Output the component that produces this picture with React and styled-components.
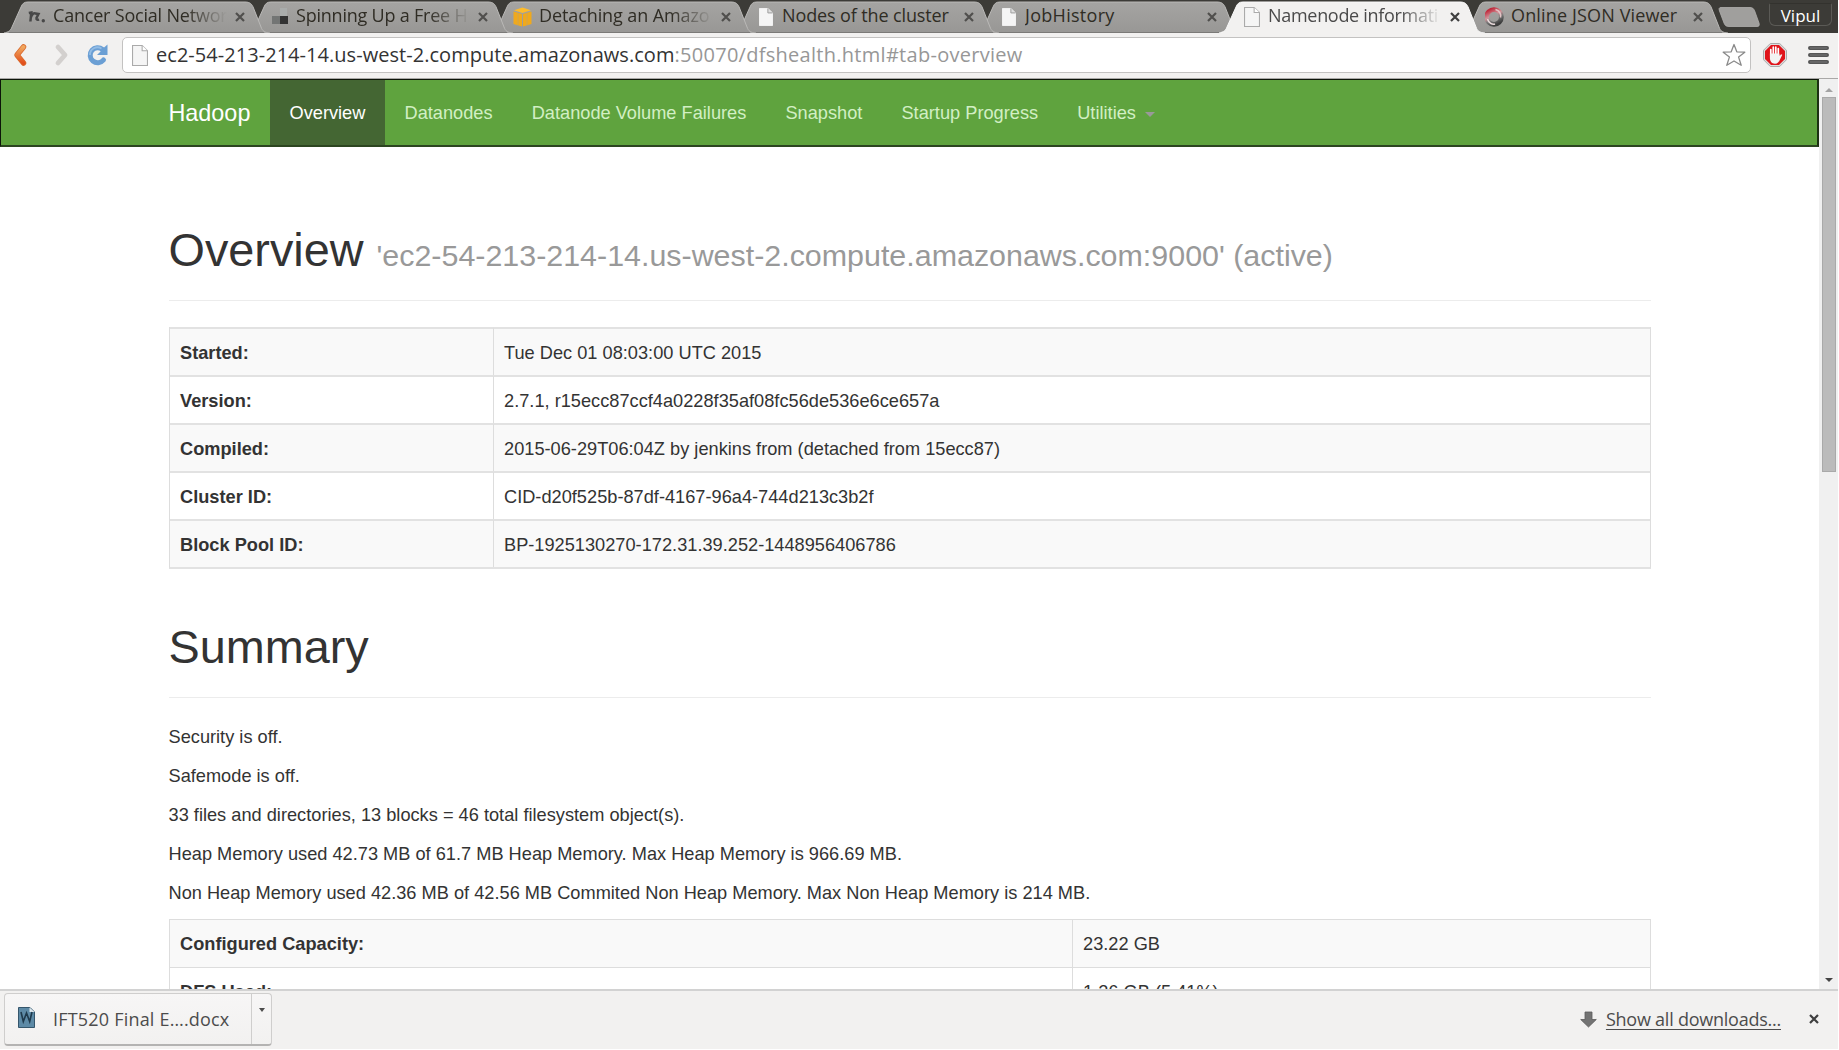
import React from "react";
import styled, { createGlobalStyle, css } from "styled-components";

const uiFont = `"Open Sans", "Noto Sans", sans-serif`;
const pageFont = `"Liberation Sans", Arial, sans-serif`;

const GlobalStyle = createGlobalStyle`
  * { box-sizing: border-box; }
  html, body { margin: 0; padding: 0; background: #fff; overflow: hidden; }
`;

const Window = styled.div`
  width: 1838px;
  height: 1049px;
  display: flex;
  flex-direction: column;
  overflow: hidden;
  background: #fff;
`;

/* ---------- tab strip ---------- */

const TabStrip = styled.div`
  display: flex;
  flex: none;
  height: 33px;
  padding-left: 8px;
  background: #3c3b37;
`;

const TabBox = styled.div`
  position: relative;
  z-index: ${(p) => p.$level};
  flex: none;
  display: flex;
  align-items: center;
  width: 258px;
  height: 33px;
  margin-right: -15px;
  padding: 0 20px 4px 19px;
`;

const TabShape = styled.svg`
  position: absolute;
  left: -4px;
  top: 0;
  z-index: -1;
`;

const Favicon = styled.span`
  flex: none;
  display: flex;
  align-items: center;
  width: 26px;
  height: 20px;
  margin-top: 5px;
`;

const PageIconSlot = styled.span`
  display: flex;
  padding-left: ${(p) => (p.$active ? 2 : 3)}px;
`;

const TabTitle = styled.span`
  flex: none;
  width: 174px;
  margin-top: 1px;
  overflow: hidden;
  white-space: nowrap;
  font: 18px/26px ${uiFont};
  letter-spacing: ${(p) => p.$spacing}px;
  color: ${(p) => (p.$active ? "#4a4a4a" : "#2f2c24")};
  ${(p) =>
    p.$fade &&
    css`
      mask-image: linear-gradient(to right, #000 132px, transparent 174px);
    `}
`;

const TabClose = styled.svg`
  flex: none;
  margin: 5px 0 0 8px;
`;

const NewTab = styled.svg`
  flex: none;
  margin: 6px 0 0 8px;
`;

const UserBadge = styled.div`
  width: 63px;
  height: 23px;
  margin: 3px 6px 0 auto;
  border: 1px solid #5b5a56;
  border-top-color: #33322e;
  border-radius: 2px 2px 6px 6px;
  text-align: center;
  font: 17px/23px ${uiFont};
  color: #fff;
`;

/* ---------- toolbar ---------- */

const Toolbar = styled.div`
  flex: none;
  display: flex;
  align-items: flex-start;
  height: 46px;
  padding-top: 4px;
  background: #f2f1f0;
  border-bottom: 1px solid #a9a8a7;
`;

const NavIcons = styled.div`
  flex: none;
  display: flex;
  align-items: center;
  width: 122px;
  height: 36px;
  padding-left: 13px;
`;

const ForwardIcon = styled.svg`
  margin-left: 26px;
`;

const ReloadIcon = styled.svg`
  margin-left: 17px;
`;

const AddressBar = styled.div`
  flex: none;
  display: flex;
  align-items: center;
  width: 1629px;
  height: 36px;
  padding: 0 4px 0 9px;
  background: #fff;
  border: 1px solid #c3c2c1;
  border-radius: 5px;
`;

const Url = styled.span`
  flex: 1;
  margin-left: 8px;
  font: 20px/28px ${uiFont};
  letter-spacing: 0.04px;
  color: #333;
  white-space: nowrap;
`;

const UrlPath = styled.span`
  letter-spacing: 0.28px;
  color: #979797;
`;

const ToolbarActions = styled.div`
  display: flex;
  align-items: center;
  gap: 21px;
  height: 36px;
  padding-left: 12px;
`;

/* ---------- page ---------- */

const Viewport = styled.div`
  flex: 1;
  min-height: 0;
  display: flex;
`;

const Page = styled.main`
  flex: 1;
  min-width: 0;
  overflow: hidden;
  font: 18.2px/26px ${pageFont};
  letter-spacing: 0.012px;
  color: #333;
`;

const Navbar = styled.nav`
  display: flex;
  height: 68px;
  padding-left: 148px;
  background: #5fa33e;
  border: 1px solid #0c1408;
  border-bottom: 2px solid #2c4520;
  border-right: 2px solid #1d3213;
`;

const Brand = styled.a`
  width: 121px;
  padding: 0 19px 0 19.4px;
  font-size: 23.4px;
  line-height: 66px;
  color: #fff;
`;

const NavLink = styled.a`
  display: flex;
  align-items: center;
  padding: 0 19.6px 0 19.5px;
  height: 65px;
  white-space: nowrap;
  color: ${(p) => (p.$active ? "#fff" : "#d2efc4")};
  background: ${(p) => (p.$active ? "#446633" : "transparent")};
`;

const Caret = styled.i`
  margin: 3px 0 0 9px;
  border: 5px solid transparent;
  border-top-color: #999;
  border-bottom: 0;
`;

const Content = styled.div`
  width: 1482px;
  margin-left: 169px;
`;

const PageHeader = styled.header`
  height: ${(p) => p.$height}px;
  padding-top: ${(p) => p.$top}px;
  border-bottom: 1px solid #ececec;
`;

const Title = styled.h1`
  margin: 0 0 0 -0.5px;
  font-size: 46.8px;
  font-weight: 400;
  line-height: 52px;
  letter-spacing: 0;
  white-space: nowrap;
`;

const Small = styled.small`
  font-size: 30.42px;
  color: #999;
`;

const Table = styled.div`
  display: grid;
  grid-template-columns: ${(p) => p.$first}px 1fr;
  margin-top: ${(p) => p.$top}px;
  border: solid #ddd;
  border-width: 0 1px 2px;
  border-bottom-color: #e2e2e2;
`;

const Cell = styled.div`
  height: 48px;
  padding: ${(p) => (p.$thin ? 11 : 10.5)}px 10px 0;
  border-top: ${(p) => (p.$thin ? "1px solid #ddd" : "2px solid #e2e2e2")};
  border-left: ${(p) => (p.$label ? "0" : "1px solid #ddd")};
  font-weight: ${(p) => (p.$label ? 700 : 400)};
  background: ${(p) => (p.$striped ? "#f9f9f9" : "#fff")};
  white-space: nowrap;
`;

const Facts = styled.div`
  margin: 26px 0 0 -0.5px;
`;

const Paragraph = styled.p`
  margin: 0 0 13px;
`;

const Scrollbar = styled.div`
  flex: none;
  display: flex;
  flex-direction: column;
  align-items: center;
  width: 19px;
  padding: 9px 0 7px;
  background: #f0f0f0;
`;

const ScrollArrow = styled.i`
  border: 4.5px solid transparent;
  ${(p) =>
    p.$up
      ? css`
          border-top: 0;
          border-bottom-color: #a3a3a3;
        `
      : css`
          margin-top: auto;
          border-bottom: 0;
          border-top-color: #444;
        `}
`;

const ScrollThumb = styled.div`
  width: 14px;
  height: 375px;
  margin-top: 5px;
  background: #bbb;
  border: 1px solid #a9a9a9;
`;

/* ---------- downloads shelf ---------- */

const Shelf = styled.footer`
  flex: none;
  display: flex;
  align-items: flex-start;
  height: 60px;
  padding: 2px 19px 0 4px;
  background: #f2f1f0;
  border-top: 2px solid #d2d2d2;
  font: 18px/26px ${uiFont};
  color: #4c4c4c;
`;

const Download = styled.div`
  display: flex;
  width: 268px;
  height: 53px;
  border: 1px solid #cfcecd;
  border-bottom: 2px solid #b4b3b2;
  border-radius: 4px;
  background: linear-gradient(#f7f6f6, #f2f1f0);
`;

const DownloadFile = styled.div`
  flex: 1;
  display: flex;
  align-items: center;
  padding: 0 0 3px 13px;
  letter-spacing: 0.2px;
  white-space: nowrap;
`;

const DownloadName = styled.span`
  margin: 2px 0 0 18px;
`;

const DownloadMenu = styled.div`
  width: 20px;
  padding: 14px 0 0 7px;
  border-left: 1px solid #cfcecd;
`;

const MenuArrow = styled.i`
  display: block;
  width: 0;
  border: 3.5px solid transparent;
  border-top: 4px solid #4c4c4c;
  border-bottom: 0;
`;

const ShelfRight = styled.div`
  display: flex;
  align-items: center;
  height: 52px;
  margin-left: auto;
`;

const ShowAll = styled.a`
  margin: 0 28px 0 9px;
  letter-spacing: -0.24px;
  text-decoration: underline;
  text-decoration-thickness: 1px;
  text-underline-offset: 3px;
`;

/* ---------- drawings ---------- */

const PageIcon = ({ w = 15, h = 19, outlined }) => (
  <svg width={w} height={h} viewBox="0 0 15 20" preserveAspectRatio="none">
    <path d="M.5.5h9l5 5v14H.5z" fill="#f5f5f5" stroke={outlined ? "#aaa" : "#f5f5f5"} />
    <path d="M9.5.5v5h5" fill={outlined ? "#fff" : "#ddd"} stroke={outlined ? "#aaa" : "#999"} />
  </svg>
);

const ScriptIcon = () => (
  <svg width="19" height="14" viewBox="0 0 19 14">
    <path d="M1.800 3 4.300 2.500 3.400 11.500M3.800 7.500C5 4 7 2.500 8.500 3.500L11.500 4 9.500 8c-.3 2 1 2 2.500 1.300" fill="none" stroke="#484848" strokeWidth="2.500" />
    <circle cx="16.300" cy="10.800" r="1.700" fill="#484848" />
  </svg>
);

const BlocksIcon = () => (
  <svg width="19" height="20" viewBox="0 0 19 20">
    <path fill="#a9acab" d="M10 1h7v8h-7z" />
    <path fill="#737574" d="M2 9h8v8H2z" />
    <path fill="#333" d="M10 9h8v8h-8z" />
  </svg>
);

const CubeIcon = () => (
  <svg width="19" height="20" viewBox="0 0 19 20">
    <path fill="#fdbb2b" d="M9.500.5 18 3.200 9.500 6 1 3.200z" />
    <path fill="#f0a91c" d="M.5 4.500 9 7v12.500L.5 17zM18.500 4.500 10 7v12.500l8.500-2.500z" />
    <path stroke="#c9a35c" strokeWidth=".8" d="M5 5.800V18M14 5.800V18M.5 4.500v12.200" />
  </svg>
);

const RingIcon = () => (
  <svg width="21" height="20" viewBox="0 0 21 20">
    <defs>
      <linearGradient id="ring" x1="0.200" y1="0" x2=".7" y2="1">
        <stop offset="0" stopColor="#c02a3c" />
        <stop offset=".4" stopColor="#d0949a" />
        <stop offset=".65" stopColor="#777" />
        <stop offset="1" stopColor="#3d3d3d" />
      </linearGradient>
    </defs>
    <circle cx="9" cy="10" r="7.400" fill="none" stroke="url(#ring)" strokeWidth="4.800" />
    <path d="M2.500 12c1 4 5 6 7.500 5" fill="none" stroke="#e8d9da" strokeWidth="1.500" />
    <path d="M10.500 2.500c4 1 6 5 5 8" fill="none" stroke="#e3c4c6" strokeWidth="1.500" />
  </svg>
);

const favicons = {
  script: <ScriptIcon />,
  blocks: <BlocksIcon />,
  cube: <CubeIcon />,
  ring: <RingIcon />,
};

const CloseGlyph = ({ color }) => (
  <path d="M1 1l8 8M9 1L1 9" stroke={color} strokeWidth="2.200" fill="none" />
);

const BackIcon = () => (
  <svg width="15" height="24" viewBox="0 0 15 24">
    <defs>
      <linearGradient id="back" x1="0" y1="0" x2="0" y2="1">
        <stop offset="0" stopColor="#f0a75e" />
        <stop offset="1" stopColor="#e2501c" />
      </linearGradient>
    </defs>
    <path d="M10.500 4 4 12l6.500 8" fill="none" stroke="#d9692c" strokeWidth="5.500" strokeLinecap="round" strokeLinejoin="round" />
    <path d="M10.500 4 4 12l6.500 8" fill="none" stroke="url(#back)" strokeWidth="4" strokeLinecap="round" strokeLinejoin="round" />
  </svg>
);

const tabs = [
  { title: "Cancer Social Networ", icon: "script", spacing: -0.2, fade: true },
  { title: "Spinning Up a Free H", icon: "blocks", spacing: -0.22, fade: true },
  { title: "Detaching an Amazo", icon: "cube", spacing: -0.1, fade: true },
  { title: "Nodes of the cluster", spacing: -0.12 },
  { title: "JobHistory", spacing: 0.3 },
  { title: "Namenode informati", spacing: -0.3, fade: true, active: true },
  { title: "Online JSON Viewer", icon: "ring", spacing: 0.15 },
];

const edgePath = "M0 33C5 32 7 30 8 27L17 7C18.500 3.500 20 2 24 2H241C246 2 248 4 249.500 8L257 27C258.500 31 260 32.500 266 33";

const Tab = ({ tab, level }) => (
  <TabBox $level={level}>
    <TabShape width="266" height="33" viewBox="0 0 266 33">
      <defs>
        <linearGradient id="tabfill" x1="0" y1="0" x2="0" y2="1">
          <stop offset="0" stopColor="#a5a4a2" />
          <stop offset="1" stopColor="#989795" />
        </linearGradient>
      </defs>
      <path d={`${edgePath}z`} fill={tab.active ? "#f2f1f0" : "url(#tabfill)"} />
      <path d={edgePath} fill="none" stroke={tab.active ? "#fafafa" : "#bab9b7"} strokeWidth="1" />
      {!tab.active && <path d="M5 32.500H260" stroke="#7b7a78" />}
    </TabShape>
    <Favicon>
      {tab.icon ? (
        favicons[tab.icon]
      ) : (
        <PageIconSlot $active={tab.active}>
          <PageIcon w={tab.active ? 16 : 14} h={tab.active ? 20 : 18} outlined={tab.active} />
        </PageIconSlot>
      )}
    </Favicon>
    <TabTitle $spacing={tab.spacing} $fade={tab.fade} $active={tab.active}>{tab.title}</TabTitle>
    <TabClose width="10" height="10" viewBox="0 0 10 10">
      <CloseGlyph color={tab.active ? "#3f3f3f" : "#504f4d"} />
    </TabClose>
  </TabBox>
);

const navItems = ["Overview", "Datanodes", "Datanode Volume Failures", "Snapshot", "Startup Progress", "Utilities"];

const clusterRows = [
  ["Started:", "Tue Dec 01 08:03:00 UTC 2015"],
  ["Version:", "2.7.1, r15ecc87ccf4a0228f35af08fc56de536e6ce657a"],
  ["Compiled:", "2015-06-29T06:04Z by jenkins from (detached from 15ecc87)"],
  ["Cluster ID:", "CID-d20f525b-87df-4167-96a4-744d213c3b2f"],
  ["Block Pool ID:", "BP-1925130270-172.31.39.252-1448956406786"],
];

const capacityRows = [
  ["Configured Capacity:", "23.22 GB"],
  ["DFS Used:", "1.26 GB (5.41%)"],
];

const facts = [
  "Security is off.",
  "Safemode is off.",
  "33 files and directories, 13 blocks = 46 total filesystem object(s).",
  "Heap Memory used 42.73 MB of 61.7 MB Heap Memory. Max Heap Memory is 966.69 MB.",
  "Non Heap Memory used 42.36 MB of 42.56 MB Commited Non Heap Memory. Max Non Heap Memory is 214 MB.",
];

const InfoTable = ({ rows, first, top, thin }) => (
  <Table $first={first} $top={top}>
    {rows.map(([label, value], i) => (
      <React.Fragment key={label}>
        <Cell $label $striped={i % 2 === 0} $thin={thin}>{label}</Cell>
        <Cell $striped={i % 2 === 0} $thin={thin}>{value}</Cell>
      </React.Fragment>
    ))}
  </Table>
);

export default function App() {
  return (
    <Window>
      <GlobalStyle />
      <TabStrip>
        {tabs.map((tab, i) => (
          <Tab key={tab.title} tab={tab} level={tab.active ? 20 : 10 - i} />
        ))}
        <NewTab width="44" height="22" viewBox="0 0 44 22">
          <path d="M4 1.500h29c2.500 0 3.500 1 4.500 3l4.500 12.500c.8 2.500 0 3.500-2 3.500H12c-3 0-4-1-5-3.500L2.500 5c-.8-2.300-.5-3.500 1.500-3.500z" fill="#a09f9d" stroke="#b0afad" strokeWidth=".8" />
        </NewTab>
        <UserBadge>Vipul</UserBadge>
      </TabStrip>

      <Toolbar>
        <NavIcons>
          <BackIcon />
          <ForwardIcon width="15" height="24" viewBox="0 0 15 24">
            <path d="M4 4l7 8-7 8" fill="none" stroke="#d3d0ce" strokeWidth="4.800" strokeLinecap="round" strokeLinejoin="round" />
          </ForwardIcon>
          <ReloadIcon width="22" height="22" viewBox="0 0 22 22">
            <path d="M16.500 5.500A7.500 7.500 0 1 0 17.500 16" fill="none" stroke="#6b9fd4" strokeWidth="5" strokeLinecap="round" />
            <path d="M21.500.5v10.500H11l4-4 2.500-3z" fill="#6b9fd4" />
            <path d="M15.500 4.500A7.500 7.500 0 0 0 4 11" fill="none" stroke="#93bde6" strokeWidth="1.800" />
          </ReloadIcon>
        </NavIcons>
        <AddressBar>
          <PageIcon w={16} h={21} outlined />
          <Url>
            ec2-54-213-214-14.us-west-2.compute.amazonaws.com<UrlPath>:50070/dfshealth.html#tab-overview</UrlPath>
          </Url>
          <svg width="24" height="24" viewBox="0 0 24 24">
            <path d="M12 1.500l2.800 7.300 8 .4-6.200 4.900 2.600 8.200-7.200-4.300-7.200 4.300 2.600-8.200-6.200-4.900 8-.4z" fill="#fff" stroke="#8a8a8a" strokeWidth="1.300" strokeLinejoin="round" />
          </svg>
        </AddressBar>
        <ToolbarActions>
          <svg width="24" height="24" viewBox="0 0 24 24">
            <path d="M7.300.5h9.400l6.800 6.800v9.400l-6.800 6.800H7.300L.5 16.700V7.300z" fill="#ddd" stroke="#aaa" />
            <path d="M8 2h8l6 6v8l-6 6H8l-6-6V8z" fill="#e0141a" />
            <path d="M7.800 13V6.500M10.300 12V4.200M12.800 12V4.200M15.300 13V5.500" stroke="#fff" strokeWidth="1.700" strokeLinecap="round" />
            <path d="M6.900 10.500h9.300l.6 2.500 1.200-1.800 1.300.6-2.400 5c-1 2.300-2.300 4-4.900 4-3.400 0-5.100-2.700-5.100-5.700z" fill="#f3f3f3" />
          </svg>
          <svg width="21" height="18" viewBox="0 0 21 18">
            <path d="M2 2h17M2 9h17M2 16h17" stroke="#565656" strokeWidth="4" strokeLinecap="round" />
            <path d="M2 2h17M2 9h17M2 16h17" stroke="#777" strokeWidth="1" />
          </svg>
        </ToolbarActions>
      </Toolbar>

      <Viewport>
        <Page>
          <Navbar>
            <Brand>Hadoop</Brand>
            {navItems.map((item) => (
              <NavLink key={item} $active={item === "Overview"}>
                {item}
                {item === "Utilities" && <Caret />}
              </NavLink>
            ))}
          </Navbar>
          <Content>
            <PageHeader $height={154} $top={76.5}>
              <Title>
                Overview <Small>'ec2-54-213-214-14.us-west-2.compute.amazonaws.com:9000' (active)</Small>
              </Title>
            </PageHeader>
            <InfoTable rows={clusterRows} first={323} top={26} />
            <PageHeader $height={129} $top={51.5}>
              <Title>Summary</Title>
            </PageHeader>
            <Facts>
              {facts.map((text) => (
                <Paragraph key={text}>{text}</Paragraph>
              ))}
            </Facts>
            <InfoTable rows={capacityRows} first={902} top={0} thin />
          </Content>
        </Page>
        <Scrollbar>
          <ScrollArrow $up />
          <ScrollThumb />
          <ScrollArrow />
        </Scrollbar>
      </Viewport>

      <Shelf>
        <Download>
          <DownloadFile>
            <svg width="17" height="21" viewBox="0 0 17 21">
              <path d="M.5.5H12l4.500 4.500v15.500H.5z" fill="#5d8aa6" stroke="#35566c" />
              <path d="M11.500.5V5h5z" fill="#dfe8ee" />
              <path d="M3 5l2.300 9.500L8.500 6l3.200 8.500L14 5" fill="none" stroke="#1f3a4c" strokeWidth="1.600" />
            </svg>
            <DownloadName>IFT520 Final E….docx</DownloadName>
          </DownloadFile>
          <DownloadMenu>
            <MenuArrow />
          </DownloadMenu>
        </Download>
        <ShelfRight>
          <svg width="17" height="17" viewBox="0 0 17 17">
            <path d="M5 1h7v7.500h4.300L8.500 16 .7 8.500H5z" fill="#737373" stroke="#5a5a5a" strokeWidth=".8" />
          </svg>
          <ShowAll>Show all downloads...</ShowAll>
          <svg width="10" height="10" viewBox="0 0 10 10">
            <CloseGlyph color="#3f3f3f" />
          </svg>
        </ShelfRight>
      </Shelf>
    </Window>
  );
}
